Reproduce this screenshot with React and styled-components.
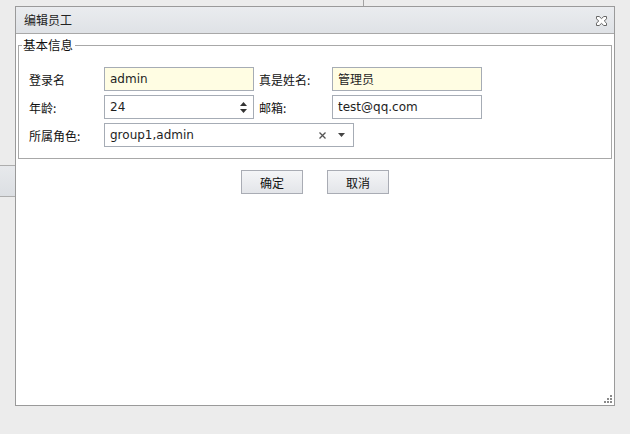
import React from 'react';
import styled, { createGlobalStyle } from 'styled-components';

const GlobalStyle = createGlobalStyle`
  html, body {
    margin: 0;
    padding: 0;
    background: #ececec;
  }
  body {
    font-family: "DejaVu Sans", "Noto Sans CJK SC", sans-serif;
    font-size: 12px;
    color: #000;
  }
`;

const Desktop = styled.div`
  position: relative;
  width: 630px;
  height: 434px;
  overflow: hidden;
  background: #ececec;
`;

// bits of the page that sit behind the dialog
const BackDivider = styled.div`
  position: absolute;
  left: 363px;
  top: 0;
  width: 1px;
  height: 6px;
  background: #a3a3a3;
`;

const BackTab = styled.div`
  position: absolute;
  left: 0;
  top: 165px;
  width: 15px;
  height: 30px;
  border-top: 1px solid #adadad;
  border-bottom: 1px solid #adadad;
  background: linear-gradient(#e7e9ec, #dcdfe3);
`;

const Window = styled.div`
  position: absolute;
  left: 15px;
  top: 6px;
  width: 598px;
  height: 398px;
  border: 1px solid #9a9a9a;
  background: #fff;
  display: flex;
  flex-direction: column;
`;

const TitleBar = styled.div`
  height: 26px;
  border-bottom: 1px solid #a8a8a8;
  background: linear-gradient(#eaecef, #dfe2e6);
  display: flex;
  align-items: center;
  justify-content: space-between;
  padding: 0 6px 0 8px;
`;

const Title = styled.span`
  font-family: "Noto Sans CJK SC", sans-serif;
  font-size: 12px;
  color: #222;
  line-height: 16px;
`;

const CloseButton = styled.div`
  width: 13px;
  height: 12px;
  display: flex;
  margin-top: 1px;
`;

const Body = styled.div`
  flex: 1;
  position: relative;
  display: flex;
  flex-direction: column;
`;

const Fieldset = styled.fieldset`
  margin: 3px 2px 0;
  padding: 14px 10px 11px 10px;
  border: 1px solid #a8a8a8;
  min-width: 0;
`;

const Legend = styled.legend`
  font-family: "Noto Sans CJK SC", sans-serif;
  font-size: 12.5px;
  line-height: 16px;
  padding: 0 2px 0 1px;
  margin-left: -7px;
  color: #111;
`;

const FormGrid = styled.div`
  display: grid;
  grid-template-columns: 75px 150px 78px 150px;
  grid-auto-rows: 24px;
  row-gap: 4px;
  align-items: center;
`;

const Label = styled.label`
  font-family: "Noto Sans CJK SC", sans-serif;
  font-size: 12px;
  color: #111;
  padding-left: ${p => (p.$second ? '5px' : '0')};
`;

const Field = styled.div`
  height: 24px;
  box-sizing: border-box;
  border: 1px solid #a6acb5;
  background: ${p => (p.$required ? '#fffde3' : '#fff')};
  display: flex;
  align-items: center;
  padding: 0 5px;
  grid-column: ${p => (p.$wide ? 'span 3' : 'auto')};
  width: ${p => (p.$wide ? '250px' : 'auto')};
`;

const Value = styled.span`
  flex: 1;
  font-family: "DejaVu Sans", "Noto Sans CJK SC", sans-serif;
  font-size: 12px;
  color: #1e1e1e;
  white-space: nowrap;
  margin-top: -1px;
`;

const Spinner = styled.div`
  display: flex;
  flex-direction: column;
  gap: 3px;
  margin-right: 1px;
`;

const Actions = styled.div`
  display: flex;
  justify-content: center;
  gap: 24px;
  margin-top: 11px;
`;

const Button = styled.button`
  width: 62px;
  height: 24px;
  border: 1px solid #a9acb4;
  background: linear-gradient(#f4f5f7, #e3e5e9);
  font-family: "Noto Sans CJK SC", sans-serif;
  font-size: 12px;
  color: #111;
  padding: 0;
  cursor: pointer;
`;

const Grip = styled.div`
  position: absolute;
  right: 2px;
  bottom: 2px;
  width: 9px;
  height: 9px;
  display: flex;
`;

const TriUp = () => (
  <svg width="7" height="4" viewBox="0 0 7 4">
    <path d="M0 4 L3.5 0 L7 4 Z" fill="#333" />
  </svg>
);

const TriDown = ({ color = '#333' }) => (
  <svg width="7" height="4" viewBox="0 0 7 4">
    <path d="M0 0 L7 0 L3.5 4 Z" fill={color} />
  </svg>
);

export default function App() {
  return (
    <>
      <GlobalStyle />
      <Desktop>
        <BackDivider />
        <BackTab />
        <Window>
          <TitleBar>
            <Title>编辑员工</Title>
            <CloseButton>
              <svg width="13" height="12" viewBox="0 0 13 12">
                <path
                  d="M1.5 1.5 L4.2 1.5 L6.5 3.6 L8.8 1.5 L11.5 1.5 L11.5 3.8 L9.3 6 L11.5 8.2 L11.5 10.5 L8.8 10.5 L6.5 8.4 L4.2 10.5 L1.5 10.5 L1.5 8.2 L3.7 6 L1.5 3.8 Z"
                  fill="#fff"
                  stroke="#666"
                  strokeWidth="1"
                />
              </svg>
            </CloseButton>
          </TitleBar>
          <Body>
            <Fieldset>
              <Legend>基本信息</Legend>
              <FormGrid>
                <Label>登录名</Label>
                <Field $required><Value>admin</Value></Field>
                <Label $second>真是姓名:</Label>
                <Field $required><Value>管理员</Value></Field>

                <Label>年龄:</Label>
                <Field>
                  <Value>24</Value>
                  <Spinner>
                    <TriUp />
                    <TriDown />
                  </Spinner>
                </Field>
                <Label $second>邮箱:</Label>
                <Field><Value>test@qq.com</Value></Field>

                <Label>所属角色:</Label>
                <Field $wide>
                  <Value>group1,admin</Value>
                  <svg width="9" height="9" viewBox="0 0 9 9" style={{ marginRight: 11 }}>
                    <path d="M1.5 1.5 L7.5 7.5 M7.5 1.5 L1.5 7.5" stroke="#555" strokeWidth="1.3" />
                  </svg>
                  <TriDown color="#444" />
                  <span style={{ width: 3 }} />
                </Field>
              </FormGrid>
            </Fieldset>
            <Actions>
              <Button>确定</Button>
              <Button>取消</Button>
            </Actions>
            <Grip>
              <svg width="9" height="9" viewBox="0 0 9 9">
                <g fill="#8a8a8a">
                  <rect x="7" y="1" width="2" height="2" />
                  <rect x="4" y="4" width="2" height="2" />
                  <rect x="7" y="4" width="2" height="2" />
                  <rect x="1" y="7" width="2" height="2" />
                  <rect x="4" y="7" width="2" height="2" />
                  <rect x="7" y="7" width="2" height="2" />
                </g>
              </svg>
            </Grip>
          </Body>
        </Window>
      </Desktop>
    </>
  );
}
